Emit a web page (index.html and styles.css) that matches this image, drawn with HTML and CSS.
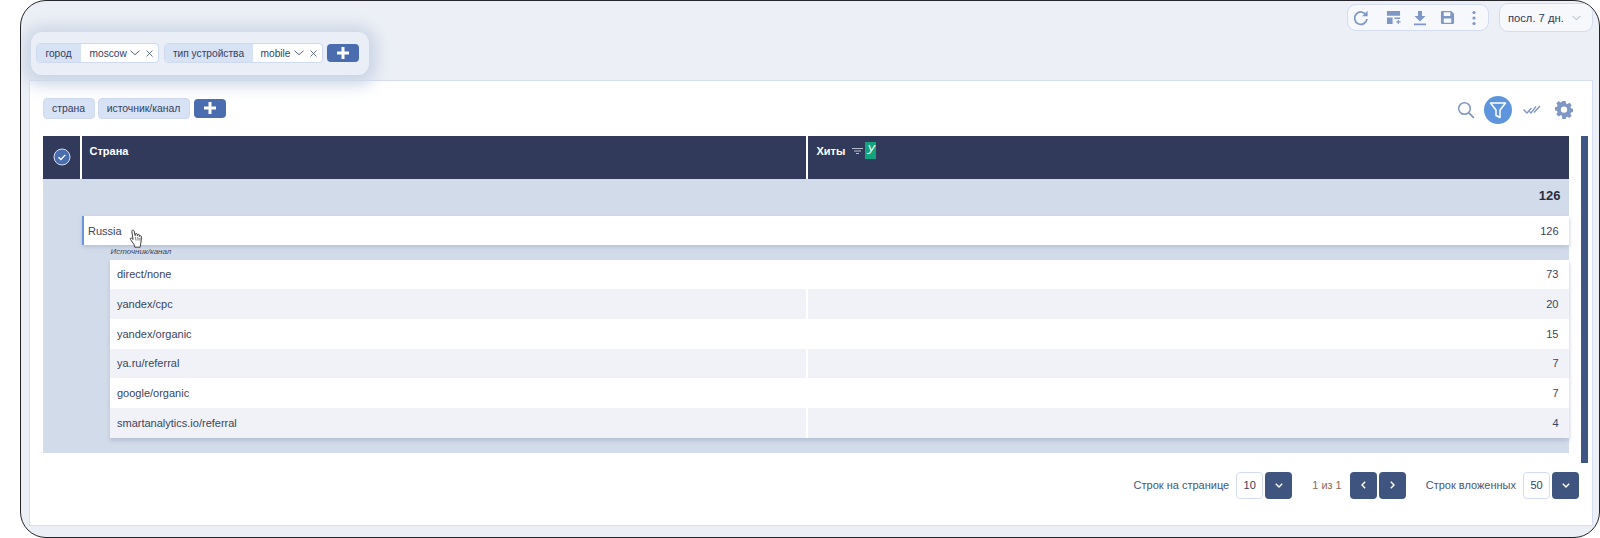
FILE: index.html
```html
<html>
    <head>
        <title>Отчёт</title>
        <link rel="stylesheet" href="styles.css">
    </head>
    <body>
        <div class="frame">
            <div class="topbar">
                <div class="tools">
                    <svg class="tool" width="18" height="18" viewBox="0 0 18 18"><path d="M14.3 6.2A6.2 6.2 0 1 0 15 10" fill="none" stroke="#7f97c4" stroke-width="1.8"/><path d="M15.6 1.8v5.4h-5.4z" fill="#7f97c4"/></svg>
                    <svg class="tool" width="15" height="15" viewBox="0 0 16 16"><path d="M1 1h14v5H1zM1 8h6v7H1zM9 8h6v1.500H9zM11 12h1.500v-1.500h1.200V12H15.500v1.300h-1.800V15h-1.200v-1.700H11z" fill="#7f97c4"/></svg>
                    <svg class="tool" width="14" height="16" viewBox="0 0 14 16"><path d="M5 1h4v5h3.500L7 11.500 1.500 6H5zM1 13.600h12V15.200H1z" fill="#7f97c4"/></svg>
                    <svg class="tool" width="15" height="15" viewBox="0 0 16 16"><path d="M2.500 1H12l3 3v9.500a1.500 1.500 0 0 1-1.500 1.500h-11A1.500 1.500 0 0 1 1 13.500v-11A1.500 1.500 0 0 1 2.500 1zM4 2.500v3.800h7V2.500zM4 9v4.500h8V9z" fill="#7f97c4" fill-rule="evenodd"/></svg>
                    <svg class="tool" width="6" height="16" viewBox="0 0 6 16"><circle cx="3" cy="2.500" r="1.600" fill="#7f97c4"/><circle cx="3" cy="8" r="1.600" fill="#7f97c4"/><circle cx="3" cy="13.500" r="1.600" fill="#7f97c4"/></svg>
                </div>
                <div class="period">
                    <span>посл. 7 дн.</span>
                    <svg width="9" height="6" viewBox="0 0 9 6"><path d="M.5.800l4 4 4-4" fill="none" stroke="#9fb0cf" stroke-width="1"/></svg>
                </div>
            </div>

            <div class="popup">
                <div class="chip">
                    <span class="chip-name">город</span>
                    <span class="chip-value chip-city">moscow
                        <svg width="10" height="6" viewBox="0 0 10 6"><path d="M.5.700l4.500 4 4.500-4" fill="none" stroke="#5a6684" stroke-width="1"/></svg>
                        <svg class="chip-x" width="7" height="7" viewBox="0 0 7 7"><path d="M.5.500l6 6M6.500.500l-6 6" stroke="#5a6684" stroke-width=".9"/></svg>
                    </span>
                </div>
                <div class="chip">
                    <span class="chip-name chip-device">тип устройства</span>
                    <span class="chip-value chip-mobile">mobile
                        <svg width="10" height="6" viewBox="0 0 10 6"><path d="M.5.700l4.500 4 4.500-4" fill="none" stroke="#5a6684" stroke-width="1"/></svg>
                        <svg class="chip-x" width="7" height="7" viewBox="0 0 7 7"><path d="M.5.500l6 6M6.500.500l-6 6" stroke="#5a6684" stroke-width=".9"/></svg>
                    </span>
                </div>
                <div class="plus"><svg width="12" height="12" viewBox="0 0 12 12"><path d="M4.500 0h3v4.500H12v3H7.500V12h-3V7.500H0v-3h4.500z" fill="#fff"/></svg></div>
            </div>

            <div class="card">
                <div class="card-head">
                    <div class="dims">
                        <span class="dim dim-country">страна</span>
                        <span class="dim dim-source">источник/канал</span>
                        <div class="plus plus-dim"><svg width="12" height="12" viewBox="0 0 12 12"><path d="M4.500 0h3v4.500H12v3H7.500V12h-3V7.500H0v-3h4.500z" fill="#fff"/></svg></div>
                    </div>
                    <div class="head-icons">
                        <svg width="18" height="18" viewBox="0 0 18 18"><circle cx="7.500" cy="7.500" r="5.800" fill="none" stroke="#7f97c4" stroke-width="1.500"/><path d="M11.800 11.800l5 5" stroke="#7f97c4" stroke-width="1.800"/></svg>
                        <div class="filter-on"><svg width="18" height="18" viewBox="0 0 18 18"><path d="M1.500 2h15l-5.500 7v7.500l-4-2V9z" fill="none" stroke="#fff" stroke-width="1.500" stroke-linejoin="round"/></svg></div>
                        <svg class="check-all" width="18" height="10" viewBox="0 0 18 10"><path d="M.5 4.500L4 8l4.500-5M6.500 6.500L8 8l5-6.500M11 7.500L17 1" fill="none" stroke="#7f97c4" stroke-width="1.300"/></svg>
                        <svg width="18" height="18" viewBox="0 0 18 18"><path fill-rule="evenodd" fill="#7f97c4" d="M7.400.5h3.200l.4 2.300 1.500.6 1.900-1.300 2.300 2.300-1.300 1.900.6 1.500 2.300.4v3.200l-2.300.4-.6 1.500 1.300 1.900-2.300 2.300-1.900-1.300-1.500.6-.4 2.300H7.400L7 15.200l-1.500-.6-1.900 1.300-2.300-2.300 1.300-1.900-.6-1.500-2.300-.4V6.600l2.300-.4.6-1.500-1.300-1.900 2.300-2.300 1.900 1.300L7 1.200zM9 5.800a3.200 3.200 0 1 0 0 6.400 3.200 3.200 0 0 0 0-6.400z" transform="translate(0 -.4)"/></svg>
                    </div>
                </div>

                <div class="table-area">
                    <div class="table">
                        <div class="thead">
                            <div class="th th-check">
                                <svg width="18" height="18" viewBox="0 0 18 18"><circle cx="9" cy="9" r="8" fill="#4a6db0" stroke="#d5deee" stroke-width="1"/><path d="M5.500 9.200l2.400 2.300 4.400-4.600" fill="none" stroke="#fff" stroke-width="1.300"/></svg>
                            </div>
                            <div class="th th-name">Страна</div>
                            <div class="th th-hits">
                                <span>Хиты</span>
                                <svg width="11" height="6" viewBox="0 0 11 6"><path d="M0 .5h11M2 3h7M4 5.500h3" stroke="#b9bfd0" stroke-width="1"/></svg>
                                <span class="badge">У</span>
                            </div>
                        </div>

                        <div class="group">
                            <div class="total">126</div>
                            <div class="parent-row">
                                <span>Russia</span>
                                <span>126</span>
                            </div>
                            <div class="sub-label">Источник/канал</div>
                            <div class="sub-rows">
                                <div class="sub-row"><span class="sub-name">direct/none</span><span class="sub-val">73</span></div>
                                <div class="sub-row"><span class="sub-name">yandex/cpc</span><span class="sub-val">20</span></div>
                                <div class="sub-row"><span class="sub-name">yandex/organic</span><span class="sub-val">15</span></div>
                                <div class="sub-row"><span class="sub-name">ya.ru/referral</span><span class="sub-val">7</span></div>
                                <div class="sub-row"><span class="sub-name">google/organic</span><span class="sub-val">7</span></div>
                                <div class="sub-row"><span class="sub-name">smartanalytics.io/referral</span><span class="sub-val">4</span></div>
                            </div>
                        </div>
                    </div>
                    <div class="scroll"></div>
                </div>

                <div class="pager">
                    <span class="pager-label">Строк на странице</span>
                    <span class="num">10</span>
                    <span class="btn btn-down"><svg width="8" height="5" viewBox="0 0 8 5"><path d="M.8.800L4 4 7.200.800" fill="none" stroke="#fff" stroke-width="1.400"/></svg></span>
                    <span class="pager-count">1 из 1</span>
                    <span class="btn"><svg width="5" height="8" viewBox="0 0 5 8"><path d="M4.200.800L1 4l3.200 3.200" fill="none" stroke="#fff" stroke-width="1.400"/></svg></span>
                    <span class="btn btn-next"><svg width="5" height="8" viewBox="0 0 5 8"><path d="M.8.800L4 4 .8 7.200" fill="none" stroke="#fff" stroke-width="1.400"/></svg></span>
                    <span class="pager-label pager-nested">Строк вложенных</span>
                    <span class="num">50</span>
                    <span class="btn btn-down"><svg width="8" height="5" viewBox="0 0 8 5"><path d="M.8.800L4 4 7.200.800" fill="none" stroke="#fff" stroke-width="1.400"/></svg></span>
                </div>
            </div>

            <svg class="hand" width="15" height="21" viewBox="0 0 14 20"><path d="M4 1.200c.8-.5 1.500 0 1.700.8l1 4.200.2-1.300c.2-.9 1.500-.8 1.700.1l.3 1.500.3-.9c.3-.8 1.400-.6 1.500.2l.2 1.300.4-.5c.5-.5 1.300-.2 1.300.6 0 2.500-.1 4.500-.6 6.300l-.6 3.800H6.300l-.6-2.300L2.300 10c-.7-.9.300-1.800 1.100-1.200l1.300 1.100L3.500 2.500c-.1-.5.100-1 .5-1.300z" fill="#fff" stroke="#333" stroke-width=".9" stroke-linejoin="round"/><path d="M7 7.500l.5 3.500M9.200 7.500l.3 3.500M11.200 8.500l-.1 2.500" stroke="#333" stroke-width=".6"/></svg>
        </div>
    </body>
</html>
```

FILE: styles.css
```css
html, body{
    margin: 0;
    background: #fff;
}
body{
    font-family: "Liberation Sans", Arial, sans-serif;
    font-size: 11px;
    color: #3a4460;
}
.frame{
    position: relative;
    box-sizing: border-box;
    width: 1580px;
    height: 538px;
    margin-left: 20px;
    padding: 0 6px 10.5px 7.5px;
    background: #ecf0f6;
    border: 1.5px solid #26262a;
    border-radius: 26px;
    overflow: hidden;
}

/* top right */
.topbar{
    display: flex;
    justify-content: flex-end;
    align-items: flex-start;
    gap: 10px;
    height: 78.5px;
    padding-top: 2px;
    box-sizing: border-box;
}
.tools{
    display: flex;
    align-items: center;
    box-sizing: border-box;
    width: 142px;
    height: 27px;
    margin-top: 1px;
    padding-left: 3.5px;
    background: #f6f8fc;
    border: 1px solid #d3ddef;
    border-radius: 9px;
}
.tool{
    flex: none;
}
.tool:nth-child(2){
    margin-left: 16px;
}
.tool:nth-child(3){
    margin-left: 12px;
}
.tool:nth-child(4){
    margin-left: 13px;
}
.tool:nth-child(5){
    margin-left: 16px;
}
.period{
    display: flex;
    align-items: center;
    justify-content: space-between;
    box-sizing: border-box;
    width: 94px;
    height: 29px;
    padding: 0 11px 0 8px;
    background: #f6f8fc;
    border: 1px solid #d3ddef;
    border-radius: 9px;
    color: #2e3a5c;
    font-size: 11.2px;
}

/* filters popup, sits over the card */
.popup{
    position: absolute;
    left: 9.5px;
    top: 30.5px;
    box-sizing: border-box;
    display: flex;
    align-items: center;
    gap: 5px;
    width: 338px;
    height: 43px;
    padding-left: 5px;
    background: #e9eef7;
    border-radius: 11px;
    box-shadow: 0 2px 16px 8px #cbd5e6;
}
.chip{
    display: flex;
    height: 20px;
    border: 1px solid #cfdaee;
    border-radius: 4px;
    overflow: hidden;
    background: #fff;
    box-sizing: border-box;
    color: #35405f;
    font-size: 10.2px;
}
.chip-name{
    display: flex;
    align-items: center;
    justify-content: center;
    width: 44px;
    background: #d7e2f4;
}
.chip-device{
    width: 88px;
}
.chip-value{
    display: flex;
    align-items: center;
    gap: 3px;
    padding-left: 9px;
    width: 68px;
}
.chip-mobile{
    padding-left: 8px;
    width: 61px;
}
.chip-x{
    margin-left: 3px;
}
.plus{
    display: flex;
    align-items: center;
    justify-content: center;
    width: 32px;
    height: 18px;
    margin-left: -1px;
    background: #4a6db0;
    border-radius: 4px;
}
.plus-dim{
    margin-left: 1px;
    height: 19px;
}

/* card */
.card{
    box-sizing: border-box;
    height: 446px;
    padding-left: 13px;
    background: #fff;
    border: 1px solid #d5deee;
}
.card-head{
    display: flex;
    justify-content: space-between;
    height: 55px;
    padding-right: 19px;
}
.dims{
    display: flex;
    align-items: center;
    gap: 3px;
    height: 21px;
    margin-top: 17px;
}
.dim{
    display: flex;
    align-items: center;
    justify-content: center;
    box-sizing: border-box;
    height: 21px;
    background: #d7e2f4;
    border: 1px solid #cfdaee;
    border-radius: 4px;
    color: #35405f;
    font-size: 10.4px;
}
.dim-country{
    width: 52px;
}
.dim-source{
    width: 92px;
}
.head-icons{
    display: flex;
    align-items: center;
    gap: 9px;
    height: 28px;
    margin-top: 15px;
}
.filter-on{
    display: flex;
    align-items: center;
    justify-content: center;
    width: 28px;
    height: 28px;
    background: #5f95dc;
    border-radius: 50%;
}
.check-all{
    margin: 0 5px 0 2px;
}

/* table */
.table-area{
    display: flex;
    align-items: flex-start;
    gap: 12px;
}
.table{
    width: 1526px;
}
.thead{
    display: flex;
    gap: 2px;
    height: 43px;
    background: #fff;
}
.th{
    background: #323a5b;
    color: #fff;
    font-weight: bold;
    font-size: 11px;
    box-sizing: border-box;
    padding-top: 9px;
}
.th-check{
    width: 37px;
    padding: 12px 0 0 10px;
}
.th-name{
    width: 724px;
    padding-left: 8px;
}
.th-hits{
    display: flex;
    align-items: flex-start;
    gap: 7px;
    width: 761px;
    padding-left: 9px;
}
.th-hits svg{
    margin-top: 3px;
}
.badge{
    width: 11px;
    height: 17px;
    margin: -3px 0 0 -5px;
    background: #12a37f;
    text-align: center;
    font-weight: normal;
    font-style: italic;
    font-size: 12px;
    line-height: 16px;
}
.group{
    height: 274px;
    background: #d2dbe9;
}
.total{
    height: 37px;
    padding-right: 8px;
    box-sizing: border-box;
    line-height: 33px;
    text-align: right;
    font-size: 13px;
    font-weight: bold;
    color: #262d40;
}
.parent-row{
    display: flex;
    justify-content: space-between;
    align-items: center;
    box-sizing: border-box;
    height: 29px;
    margin-left: 39px;
    padding: 1px 10px 0 4.5px;
    background: #fff;
    border-left: 2px solid #6b94d8;
    box-shadow: 0 2px 4px #b7c2d4;
}
.sub-label{
    height: 15px;
    margin-left: 68px;
    padding-top: 1px;
    box-sizing: border-box;
    font-size: 8px;
    font-style: italic;
    line-height: 11px;
}
.sub-rows{
    display: flex;
    flex-direction: column;
    height: 178px;
    margin-left: 67px;
    box-shadow: 0 3px 4px #b7c2d4;
}
.sub-row{
    display: flex;
    flex: 1;
    align-items: center;
    background: #fff;
}
.sub-row:nth-child(even){
    background: #f0f2f8;
}
.sub-name{
    width: 696px;
    padding-left: 7.5px;
    box-sizing: border-box;
}
.sub-val{
    flex: 1;
    align-self: stretch;
    display: flex;
    align-items: center;
    justify-content: flex-end;
    padding-right: 10px;
    border-left: 2px solid #fff;
}
.scroll{
    width: 7px;
    height: 327px;
    background: #3f5685;
}

/* pagination */
.pager{
    display: flex;
    align-items: center;
    justify-content: flex-end;
    height: 27px;
    margin-top: 9px;
    padding-right: 13px;
    color: #46567a;
}
.num{
    display: flex;
    align-items: center;
    justify-content: center;
    box-sizing: border-box;
    width: 27px;
    height: 27px;
    margin: 0 2px 0 7px;
    background: #fff;
    border: 1px solid #d3ddef;
    border-radius: 4px;
    color: #35405f;
}
.btn{
    display: flex;
    align-items: center;
    justify-content: center;
    width: 27px;
    height: 27px;
    background: #3f5580;
    border-radius: 4px;
}
.btn-next{
    margin-left: 2px;
}
.pager-count{
    margin: 0 8px 0 20px;
    color: #8a6a5f;
}
.pager-nested{
    margin-left: 20px;
}
.hand{
    position: absolute;
    left: 106.5px;
    top: 227.5px;
}
```
